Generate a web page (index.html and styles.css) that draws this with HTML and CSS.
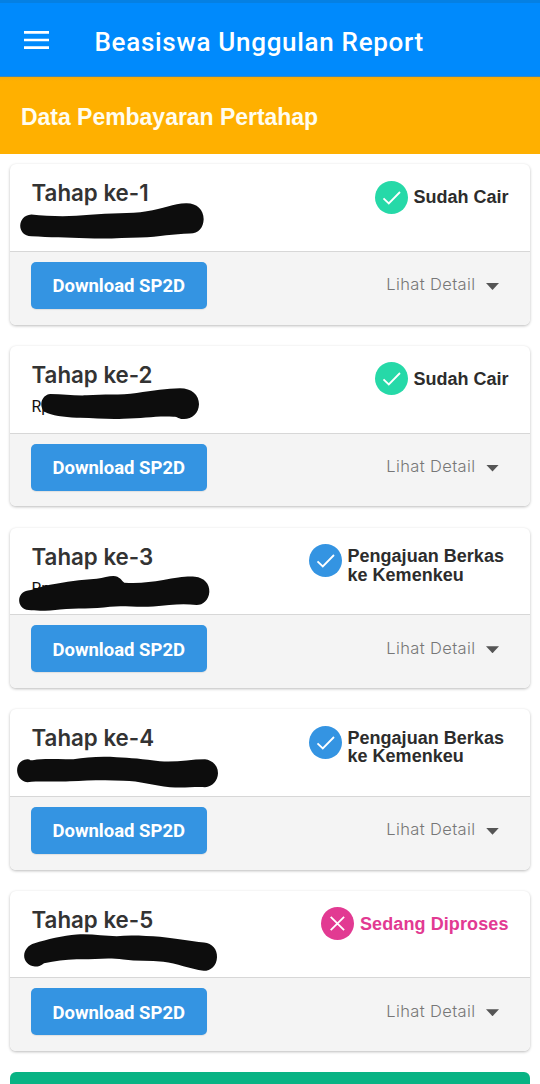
FILE: index.html
```html
<!DOCTYPE html>
<html lang="id">
<head>
<meta charset="utf-8">
<title>Beasiswa Unggulan Report</title>
<link rel="stylesheet" href="styles.css">
</head>
<body>
<header class="app-bar">
  <svg class="menu" viewBox="0 0 26 20"><path d="M0 2.4h25M0 10h25M0 17.6h25" stroke="#fff" stroke-width="2.6"/></svg>
  <h1 class="app-title">Beasiswa Unggulan Report</h1>
</header>
<div class="banner"><span class="banner-text">Data Pembayaran Pertahap</span></div>
<main class="list">
  <section class="card">
    <div class="card-top">
      <h2 class="stage">Tahap ke-1</h2>
      <div class="status"><svg class="badge" viewBox="0 0 33 33"><circle cx="16.5" cy="16.5" r="16.5" fill="#26d9a8"/><path d="M8.5 17.3l5.3 5.2L25 11" fill="none" stroke="#fff" stroke-width="1.8"/></svg><span class="label cair">Sudah Cair</span></div>
    </div>
    <div class="card-foot"><button class="download"><span>Download SP2D</span></button><div class="detail"><span class="detail-text">Lihat Detail</span><i class="caret"></i></div></div>
    <svg class="scribble" viewBox="30 28.5 720 270"><path d="M94 180C150 186 210 187 270 181C330 174 390 179 440 170C490 163 520 146 558 146C590 145 611 165 611 194C610 220 596 236 570 237C520 238 480 247 420 249C370 250 320 254 260 251C200 249 150 248 94 245C50 245 50 183 94 180Z"/></svg>
  </section>
  <section class="card">
    <div class="card-top">
      <div><h2 class="stage">Tahap ke-2</h2><p class="amount">Rp</p></div>
      <div class="status"><svg class="badge" viewBox="0 0 33 33"><circle cx="16.5" cy="16.5" r="16.5" fill="#26d9a8"/><path d="M8.5 17.3l5.3 5.2L25 11" fill="none" stroke="#fff" stroke-width="1.8"/></svg><span class="label cair">Sudah Cair</span></div>
    </div>
    <div class="card-foot"><button class="download"><span>Download SP2D</span></button><div class="detail"><span class="detail-text">Lihat Detail</span><i class="caret"></i></div></div>
    <svg class="scribble" viewBox="30 33 720 270"><path d="M151 177C190 178 220 182 260 181C310 177 360 181 410 174C460 167 500 161 540 160C575 160 597 180 597 208C596 237 575 253 550 252C535 252 535 245 520 245C470 242 430 250 370 251C320 254 280 247 230 248C190 247 155 241 135 231C116 217 122 180 151 177Z"/></svg>
  </section>
  <section class="card">
    <div class="card-top">
      <div><h2 class="stage">Tahap ke-3</h2><p class="amount">Rp</p></div>
      <div class="status"><svg class="badge" viewBox="0 0 33 33"><circle cx="16.5" cy="16.5" r="16.5" fill="#3494e2"/><path d="M8.5 17.3l5.3 5.2L25 11" fill="none" stroke="#fff" stroke-width="1.8"/></svg><span class="label kemenkeu">Pengajuan Berkas<br>ke Kemenkeu</span></div>
    </div>
    <div class="card-foot"><button class="download"><span>Download SP2D</span></button><div class="detail"><span class="detail-text">Lihat Detail</span><i class="caret"></i></div></div>
    <svg class="scribble" viewBox="30 37.8 720 270"><path d="M84 225C110 222 120 213 150 208C200 199 240 193 290 190C310 188 326 182 340 182C360 183 363 195 373 202C420 205 450 200 490 194C530 186 560 182 585 184C613 187 629 205 628 230C626 255 609 269 590 269C550 263 510 268 460 273C410 277 370 269 330 274C280 282 230 277 180 282C150 286 110 287 86 284C48 280 49 229 84 225Z"/></svg>
  </section>
  <section class="card">
    <div class="card-top">
      <h2 class="stage">Tahap ke-4</h2>
      <div class="status"><svg class="badge" viewBox="0 0 33 33"><circle cx="16.5" cy="16.5" r="16.5" fill="#3494e2"/><path d="M8.5 17.3l5.3 5.2L25 11" fill="none" stroke="#fff" stroke-width="1.8"/></svg><span class="label kemenkeu">Pengajuan Berkas<br>ke Kemenkeu</span></div>
    </div>
    <div class="card-foot"><button class="download"><span>Download SP2D</span></button><div class="detail"><span class="detail-text">Lihat Detail</span><i class="caret"></i></div></div>
    <svg class="scribble" viewBox="30 27.6 720 270"><path d="M82 178C92 178 88 183 98 181C140 175 180 180 220 178C260 172 300 169 350 172C390 174 430 177 480 184C530 188 570 178 615 178C638 181 654 198 654 220C653 243 638 260 615 262C580 260 550 266 510 262C460 258 420 243 370 243C310 239 260 243 210 244C160 247 125 243 82 247C42 242 40 181 82 178Z"/></svg>
  </section>
  <section class="card">
    <div class="card-top">
      <h2 class="stage">Tahap ke-5</h2>
      <div class="status"><svg class="badge" viewBox="0 0 33 33"><circle cx="16.5" cy="16.5" r="16.5" fill="#e23a92"/><path d="M9.7 9.8l13.4 13.4M23.1 9.8L9.7 23.2" stroke="#fff" stroke-width="1.8"/></svg><span class="label proses">Sedang Diproses</span></div>
    </div>
    <div class="card-foot"><button class="download"><span>Download SP2D</span></button><div class="detail"><span class="detail-text">Lihat Detail</span><i class="caret"></i></div></div>
    <svg class="scribble" viewBox="30 32.4 720 270"><path d="M104 189C140 178 190 166 230 163C275 160 310 168 350 168C390 164 440 167 480 170C530 175 570 184 612 187C637 190 652 207 651 231C650 256 633 272 611 272C570 267 530 249 490 245C450 240 410 244 370 238C320 230 280 239 230 237C195 239 165 242 132 249C120 257 117 259 105 259C61 253 63 200 104 189Z"/></svg>
  </section>
  <div class="bottom-button"></div>
</main>
</body>
</html>
```
FILE: styles.css
```css
* { box-sizing: border-box; }
body { margin: 0; height: 1084px; overflow: hidden; background: #fff; font-family: "Liberation Sans", Arial, sans-serif; }
h1, h2, p { margin: 0; white-space: nowrap; }

.app-bar { height: 77px; padding: 4px 0 0 24px; display: flex; align-items: center; background: #008afc; border-top: 3px solid #0580e2; border-bottom: 1px solid #3f87b4; }
.menu { width: 26px; height: 20px; margin-right: 44.5px; margin-bottom: 3px; }
.app-title { font: 500 26px/34px Roboto, sans-serif; letter-spacing: .7px; color: #fff; }
.banner { height: 77px; padding-left: 21px; display: flex; align-items: center; background: linear-gradient(#f6a907, #ffb000 4px); }
.banner-text { font-size: 23px; line-height: 28px; font-weight: 700; color: #fffdf0; white-space: nowrap; padding-top: 3px; letter-spacing: -.03px; }

.list { padding: 10.4px 10px 0; display: flex; flex-direction: column; gap: 21.1px; }
.card { position: relative; flex: none; height: 160.5px; border-radius: 6px; background: #fff; box-shadow: 0 1px 3px rgba(0, 0, 0, .27); }
.card-top { height: 86.6px; padding: 15px 21.5px 0; display: flex; justify-content: space-between; align-items: flex-start; }
.stage { font: 600 22.3px/28px Inter, sans-serif; color: #333; }
.amount { font: 400 16px/20px Roboto, sans-serif; color: #111; padding-top: 8px; }
.status { display: flex; align-items: center; gap: 6px; padding-top: 1.5px; }
.badge { width: 33px; height: 33px; flex: none; }
.label { font-size: 18px; line-height: 18.5px; font-weight: 700; color: #2c2c2c; white-space: nowrap; }
.cair { margin-left: -.5px; }
.kemenkeu { padding: 3px 4.5px 0 0; margin-left: -.8px; margin-bottom: -7px; letter-spacing: .03px; }
.proses { color: #e23a92; letter-spacing: .1px; }

.card-foot { height: 73.9px; padding: 10px 31px 0 21px; display: flex; justify-content: space-between; align-items: flex-start; background: #f4f4f4; border-top: 1px solid #d7d7d7; border-radius: 0 0 6px 6px; }
.download { width: 175.5px; height: 47px; padding: 2px 0 0; border: 0; border-radius: 5px; background: #3494e2; color: #fff; font: 700 18.5px/24px Roboto, sans-serif; white-space: nowrap; box-shadow: 0 1px 1px rgba(0, 0, 0, .08); }
.detail { display: flex; align-items: center; gap: 10.5px; padding-top: 10.5px; }
.detail-text { font: 300 16.5px/24px Inter, sans-serif; letter-spacing: .38px; color: #777; }
.caret { width: 13px; height: 7px; margin-top: 4px; background: #555; clip-path: polygon(0 0, 100% 0, 50% 100%); }
.scribble { position: absolute; left: 0; top: 0; width: 240px; height: 90px; fill: #0d0d0d; }
.bottom-button { flex: none; height: 46px; border-radius: 6px; background: #08b384; }
```
